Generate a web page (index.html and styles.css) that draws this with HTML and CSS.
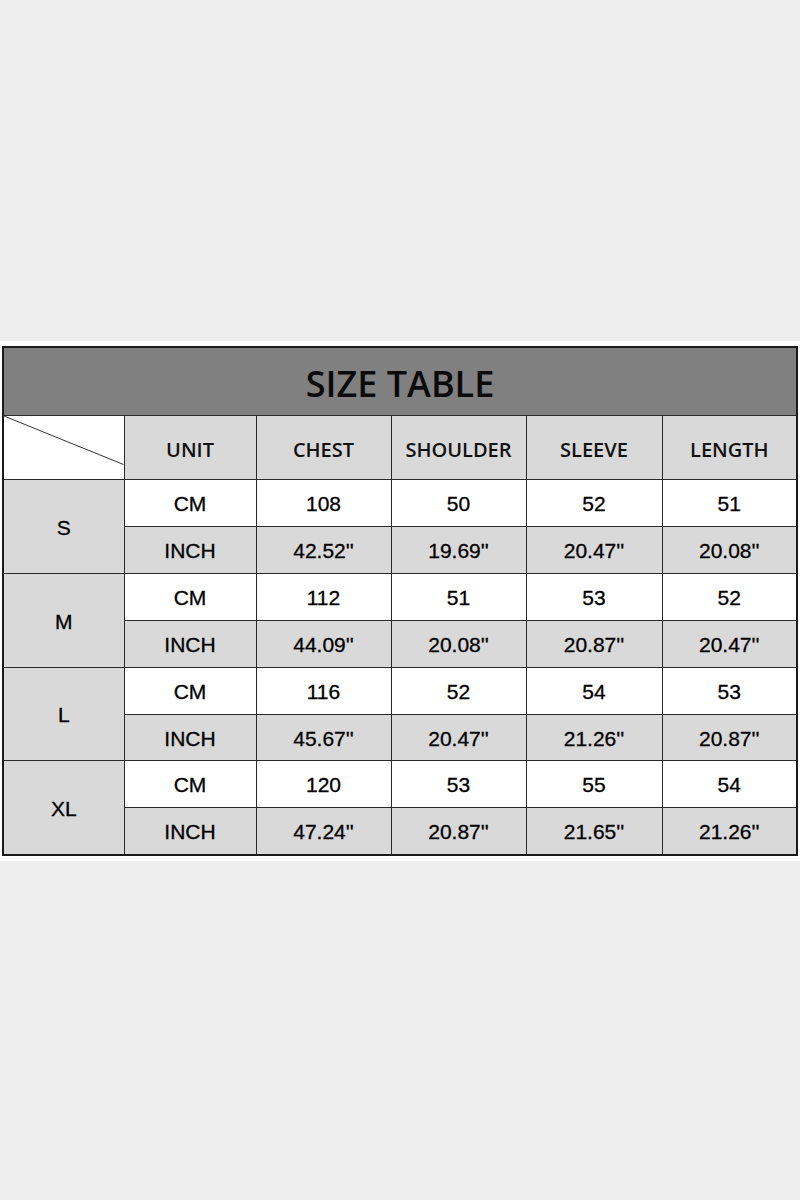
FILE: index.html
```html
<!DOCTYPE html>
<html>
<head>
<meta charset="utf-8">
<link rel="stylesheet" href="styles.css">
</head>
<body>
<div class="band">
  <table class="size-table">
    <colgroup>
      <col class="c-size"><col class="c-unit"><col class="c-chest"><col class="c-shoulder"><col class="c-sleeve"><col class="c-length">
    </colgroup>
    <tr class="title-row"><td colspan="6" class="title">SIZE TABLE</td></tr>
    <tr class="head-row">
      <td class="corner"><svg class="diag" viewBox="0 0 100 100" preserveAspectRatio="none"><line x1="0" y1="0" x2="100" y2="77" stroke="#333" stroke-width="1" vector-effect="non-scaling-stroke"/></svg></td>
      <td class="head">UNIT</td><td class="head">CHEST</td><td class="head">SHOULDER</td><td class="head">SLEEVE</td><td class="head">LENGTH</td>
    </tr>
    <tr class="cm"><td rowspan="2" class="size">S</td><td>CM</td><td>108</td><td>50</td><td>52</td><td>51</td></tr>
    <tr class="inch"><td>INCH</td><td>42.52''</td><td>19.69''</td><td>20.47''</td><td>20.08''</td></tr>
    <tr class="cm"><td rowspan="2" class="size">M</td><td>CM</td><td>112</td><td>51</td><td>53</td><td>52</td></tr>
    <tr class="inch"><td>INCH</td><td>44.09''</td><td>20.08''</td><td>20.87''</td><td>20.47''</td></tr>
    <tr class="cm"><td rowspan="2" class="size">L</td><td>CM</td><td>116</td><td>52</td><td>54</td><td>53</td></tr>
    <tr class="inch short"><td>INCH</td><td>45.67''</td><td>20.47''</td><td>21.26''</td><td>20.87''</td></tr>
    <tr class="cm"><td rowspan="2" class="size">XL</td><td>CM</td><td>120</td><td>53</td><td>55</td><td>54</td></tr>
    <tr class="inch"><td>INCH</td><td>47.24''</td><td>20.87''</td><td>21.65''</td><td>21.26''</td></tr>
  </table>
</div>
</body>
</html>
```
FILE: styles.css
```css
html, body {
  margin: 0;
  padding: 0;
  background: #eeeeee;
}
body {
  width: 800px;
  height: 1200px;
  font-family: "Liberation Sans", Arial, sans-serif;
  color: #000;
}
.band {
  margin-top: 341px;
  background: #ffffff;
  padding: 5px 2px 5px 2px;
}
.size-table {
  width: 794px;
  border-collapse: collapse;
  table-layout: fixed;
  border: 2px solid #1a1a1a;
}
.c-size { width: 121px; }
.c-unit { width: 132px; }
.c-chest { width: 135px; }
.c-shoulder { width: 135px; }
.c-sleeve { width: 136px; }
.c-length { width: 135px; }
.size-table td {
  border: 1px solid #2a2a2a;
  padding: 2px 0 0 0;
  text-align: center;
  vertical-align: middle;
  font-size: 21px;
  height: 44px;
  -webkit-text-stroke: 0.3px #000;
}
.size-table tr.short td { height: 43px; }
.title-row td.title {
  height: 64px;
  padding-top: 3px;
  background: #808080;
  font-family: "Open Sans", "Noto Sans", sans-serif;
  font-weight: 600;
  font-size: 36px;
  color: #0a0a0a;
  -webkit-text-stroke: 0;
}
.head-row td {
  height: 60px;
  padding-top: 3px;
}
.size-table td.head {
  background: #d9d9d9;
  font-family: "Open Sans", "Noto Sans", sans-serif;
  font-weight: 600;
  font-size: 20px;
  color: #111;
  -webkit-text-stroke: 0;
}
.corner {
  background: #ffffff;
  position: relative;
}
.diag {
  position: absolute;
  left: 0;
  top: 0;
  width: 100%;
  height: 100%;
  display: block;
}
.cm td { background: #ffffff; }
.inch td { background: #d9d9d9; }
.cm td.size { background: #d9d9d9; }
```
